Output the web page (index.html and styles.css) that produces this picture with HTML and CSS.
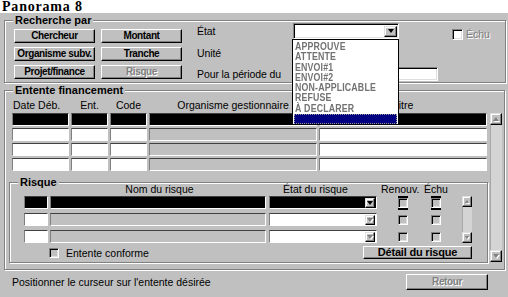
FILE: index.html
```html
<!DOCTYPE html>
<html lang="fr">
<head>
<meta charset="utf-8">
<title>Panorama 8</title>
<link rel="stylesheet" href="styles.css">
</head>
<body>
<header class="title">Panorama 8</header>

<section class="group g-search">
  <span class="glabel">Recherche par</span>
  <div class="search">
    <div class="btngrid">
      <div class="btn">Chercheur</div>
      <div class="btn">Montant</div>
      <div class="btn">Organisme subv.</div>
      <div class="btn">Tranche</div>
      <div class="btn">Projet/finance</div>
      <div class="btn disabled">Risque</div>
    </div>
    <div class="fields">
      <span class="lbl">État</span>
      <div class="combo sunken">
        <span class="abtn"><i class="tri-d"></i></span>
        <ul class="dropdown">
          <li><span>APPROUVE</span></li>
          <li><span>ATTENTE</span></li>
          <li><span>ENVOI#1</span></li>
          <li><span>ENVOI#2</span></li>
          <li><span>NON-APPLICABLE</span></li>
          <li><span>REFUSE</span></li>
          <li><span>À DECLARER</span></li>
          <li class="sel"></li>
        </ul>
      </div>
      <label class="echu"><span class="cb on"></span><span class="dtext">Échu</span></label>
      <span class="lbl">Unité</span>
      <span class="lbl">Pour la période du</span>
      <div class="datefield sunken"></div>
    </div>
  </div>
</section>

<section class="group g-entente">
  <span class="glabel">Entente financement</span>
  <div class="ent-main">
    <div class="tgrid thead">
      <span class="hl"><span>Date Déb.</span></span><span><span>Ent.</span></span><span><span>Code</span></span><span><span>Organisme gestionnaire</span></span><span><span>Titre</span></span>
    </div>
    <div class="tgrid tbody">
      <span class="cell k"></span><span class="cell k"></span><span class="cell k"></span><span class="cell k"></span><span class="cell k"></span>
      <span class="cell w"></span><span class="cell w"></span><span class="cell w"></span><span class="cell g"></span><span class="cell w"></span>
      <span class="cell w"></span><span class="cell w"></span><span class="cell w"></span><span class="cell g"></span><span class="cell w"></span>
      <span class="cell w"></span><span class="cell w"></span><span class="cell w"></span><span class="cell g"></span><span class="cell w"></span>
    </div>

    <section class="group g-risque">
      <span class="glabel">Risque</span>
      <div class="rgrid rhead">
        <span></span><span>Nom du risque</span><span class="he">État du risque</span><span class="hr">Renouv.</span><span>Échu</span>
      </div>
      <div class="rbody">
        <div class="rgrid rrows">
          <span class="cell k r1"></span><span class="cell k r2"></span>
          <span class="cell k rcombo"><span class="abtn sm"><i class="tri-d"></i></span></span>
          <span class="cbc"><span class="cb sm hlt"></span></span><span class="cbc"><span class="cb sm hlt"></span></span>

          <span class="cell w r1"></span><span class="cell g r2"></span>
          <span class="cell w rcombo"><span class="abtn sm"><i class="tri-d dis"></i></span></span>
          <span class="cbc"><span class="cb sm"></span></span><span class="cbc"><span class="cb sm"></span></span>

          <span class="cell w r1"></span><span class="cell g r2"></span>
          <span class="cell w rcombo"><span class="abtn sm"><i class="tri-d dis"></i></span></span>
          <span class="cbc"><span class="cb sm"></span></span><span class="cbc"><span class="cb sm"></span></span>
        </div>
        <div class="sb sb-small">
          <span class="sb-btn"><i class="tri-u small"></i></span>
          <span class="sb-track"></span>
          <span class="sb-btn"><i class="tri-d dis small"></i></span>
        </div>
      </div>
      <div class="rfoot">
        <span class="cb sm"></span><span class="conf">Entente conforme</span>
        <div class="btn btn-detail">Détail du risque</div>
      </div>
    </section>
  </div>
  <div class="sb sb-big">
    <span class="sb-btn"><i class="tri-u"></i></span>
    <span class="sb-track"></span>
    <span class="sb-btn"><i class="tri-d dis"></i></span>
  </div>
</section>

<footer class="status">
  <span>Positionner le curseur sur l'entente désirée</span>
  <div class="btn disabled retour">Retour</div>
</footer>
</body>
</html>
```
FILE: styles.css
```css
* { box-sizing: border-box; margin: 0; padding: 0; }
html, body { width: 508px; height: 297px; overflow: hidden; }
body {
  background: #c0c0c0;
  font-family: "Liberation Sans", Arial, sans-serif;
  font-size: 10.5px;
  color: #000;
}

.title {
  display: block;
  height: 13px;
  background: #fff;
  padding-left: 2px;
  font-family: "Liberation Serif", "Times New Roman", serif;
  font-weight: bold;
  font-size: 14px;
  line-height: 13px;
  letter-spacing: .8px;
  white-space: nowrap;
}

/* etched group box */
.group {
  position: relative;
  border: 1px solid #808080;
  box-shadow: 1px 1px 0 #fff, inset 1px 1px 0 #fff;
}
.glabel {
  position: absolute;
  top: -7px;
  left: 8px;
  padding: 0 2px;
  background: #c0c0c0;
  font-weight: bold;
  font-size: 11px;
  line-height: 12px;
  white-space: nowrap;
  z-index: 1;
}

.sunken {
  border: 1px solid;
  border-color: #808080 #fff #fff #808080;
  box-shadow: inset 1px 1px 0 #000, inset -1px -1px 0 #dfdfdf;
}

/* buttons */
.btn {
  display: flex;
  align-items: center;
  justify-content: center;
  background: #c0c0c0;
  border: 1px solid;
  border-color: #fff #000 #000 #fff;
  box-shadow: inset -1px -1px 0 #808080;
  font-weight: bold;
  font-size: 10px;
  letter-spacing: -.4px;
  white-space: nowrap;
  line-height: 1;
}
.btn.disabled { color: #808080; text-shadow: 1px 1px 0 #fff; }

/* Recherche par */
.g-search { margin: 7px 2px 0 4px; height: 63px; }
.search { display: flex; align-items: flex-start; }
.btngrid {
  display: grid;
  grid-template-columns: 81px 81px;
  grid-auto-rows: 14px;
  column-gap: 6px;
  row-gap: 4px;
  margin: 8px 0 0 9px;
}
.fields {
  display: grid;
  grid-template-columns: 96px 145px auto;
  grid-template-rows: 16px 17px 16px;
  row-gap: 5px;
  margin: 2px 0 0 15px;
}
.lbl {
  grid-column: 1;
  align-self: center;
  justify-self: start;
  line-height: 16px;
  white-space: nowrap;
  letter-spacing: -.1px;
}
.combo {
  position: relative;
  width: 106px;
  height: 16px;
  background: #fff;
  display: flex;
  justify-content: flex-end;
  align-items: center;
  padding-right: 1px;
}
.abtn {
  width: 13px;
  height: 11px;
  display: flex;
  align-items: center;
  justify-content: center;
  background: #c0c0c0;
  border: 1px solid;
  border-color: #dfdfdf #000 #000 #dfdfdf;
  box-shadow: inset -1px -1px 0 #808080, inset 1px 1px 0 #fff;
  flex: none;
}
.abtn.sm { width: 10px; height: 10px; }
.tri-d {
  width: 1px;
  height: 0;
  border-left: 3px solid transparent;
  border-right: 3px solid transparent;
  border-top: 4px solid #000;
}
.tri-u {
  width: 1px;
  height: 0;
  border-left: 3px solid transparent;
  border-right: 3px solid transparent;
  border-bottom: 4px solid #808080;
  filter: drop-shadow(1px 1px 0 #fff);
}
.tri-d.dis { border-top-color: #808080; filter: drop-shadow(1px 1px 0 #fff); }
.tri-d.small, .tri-u.small { border-left-width: 2px; border-right-width: 2px; }
.tri-d.small { border-top-width: 3px; }
.tri-u.small { border-bottom-width: 3px; }

.dropdown {
  position: absolute;
  left: -2px;
  top: calc(100% + 1px);
  width: 107px;
  height: 86px;
  background: #fff;
  border: 1px solid #000;
  padding: 1px 0 0 1px;
  list-style: none;
  z-index: 10;
}
.dropdown li {
  height: 10.3px;
  line-height: 10.3px;
  padding-left: 1px;
  white-space: nowrap;
}
.dropdown li span {
  display: inline-block;
  vertical-align: top;
  font-size: 11px;
  line-height: 10.3px;
  font-weight: bold;
  color: #727272;
  letter-spacing: .2px;
  transform: scaleX(.8);
  transform-origin: 0 50%;
}
.dropdown li.sel {
  height: 9.5px;
  margin: 1px 1px 0 0;
  padding: 0;
  background: #000080;
  outline: 1px dotted #9a9a9a;
  outline-offset: -1px;
}

.echu {
  grid-column: 3;
  grid-row: 1;
  align-self: start;
  margin: 5px 0 0 14px;
  display: flex;
  align-items: center;
  gap: 3px;
}
.cb {
  width: 11px;
  height: 11px;
  background: #c0c0c0;
  border: 1px solid;
  border-color: #808080 #fff #fff #808080;
  box-shadow: inset 1px 1px 0 #000, inset -1px -1px 0 #dfdfdf;
  flex: none;
}
.cb.on { background: #fff; }
.cb.sm { width: 10px; height: 10px; }
.cb.hlt {
  box-shadow: inset 1px 1px 0 #000, inset -1px -1px 0 #dfdfdf, 0 -2px 0 #000, 0 2px 0 #000;
}
.dtext { color: #808080; text-shadow: 1px 1px 0 #fff; line-height: 13px; }
.datefield {
  grid-column: 2;
  width: 145px;
  height: 14px;
  align-self: center;
  background: #fff;
}

/* Entente financement */
.g-entente {
  margin: 7px 3px 0 4px;
  padding: 6px 2px 6px 4px;
  display: flex;
  column-gap: 2px;
  align-items: flex-start;
}
.ent-main { width: 479px; flex: none; }
.tgrid {
  display: grid;
  grid-template-columns: 57px 37px 37px 168px 168px;
  column-gap: 2px;
  margin-left: 3px;
}
.thead { height: 16px; line-height: 16px; white-space: nowrap; }
.thead > span { display: flex; justify-content: center; }
.thead > .hl { justify-content: flex-start; padding-left: 1px; }
.tbody { grid-auto-rows: 13px; row-gap: 2px; }
.cell { border: 1px solid; border-color: #404040 #fff #fff #808080; }
.w { background: #fff; }
.g { background: #c0c0c0; }
.k { background: #000; }

/* Risque */
.g-risque { margin-top: 11px; height: 81px; padding: 0 0 3px 14px; }
.rgrid { display: grid; grid-template-columns: 26px 219px 108px 52px 14px; }
.rhead { height: 13px; line-height: 13px; white-space: nowrap; }
.rhead span { display: flex; justify-content: center; }
.rhead .he { justify-content: flex-start; padding-left: 14px; }
.rhead .hr { justify-content: flex-start; padding-left: 4px; }
.rbody { display: flex; align-items: flex-start; }
.rrows { grid-template-rows: 13px 13px 13px; row-gap: 4px; }
.r1 { width: 24px; }
.r2 { width: 216px; }
.rcombo { display: flex; justify-content: flex-end; align-items: center; padding-right: 1px; }
.cbc { display: flex; align-items: center; justify-content: center; }

.sb { display: flex; flex-direction: column; background: #d4d4d4; flex: none; }
.sb-btn {
  flex: none;
  display: flex;
  align-items: center;
  justify-content: center;
  background: #c0c0c0;
  border: 1px solid;
  border-color: #dfdfdf #000 #000 #dfdfdf;
  box-shadow: inset -1px -1px 0 #808080, inset 1px 1px 0 #fff;
}
.sb-track { flex: 1; border-left: 1px solid #a8a8a8; }
.sb-big { width: 12px; height: 149px; margin-top: 16px; }
.sb-big .sb-btn { height: 12px; }
.sb-small { width: 10px; height: 47px; margin-left: 19px; }
.sb-small .sb-btn { height: 11px; }

.rfoot { display: flex; align-items: center; height: 13px; margin-top: 3px; }
.rfoot .cb { margin-left: 25px; }
.conf { margin-left: 7px; white-space: nowrap; }
.btn-detail {
  margin-left: auto;
  margin-right: 15px;
  width: 109px;
  height: 13px;
  font-size: 11px;
  letter-spacing: -.2px;
}

/* status bar */
.status {
  display: flex;
  align-items: center;
  height: 16px;
  margin-top: 4px;
  padding-left: 12px;
  white-space: nowrap;
}
.retour { margin-left: auto; margin-right: 20px; width: 82px; height: 16px; }
```
